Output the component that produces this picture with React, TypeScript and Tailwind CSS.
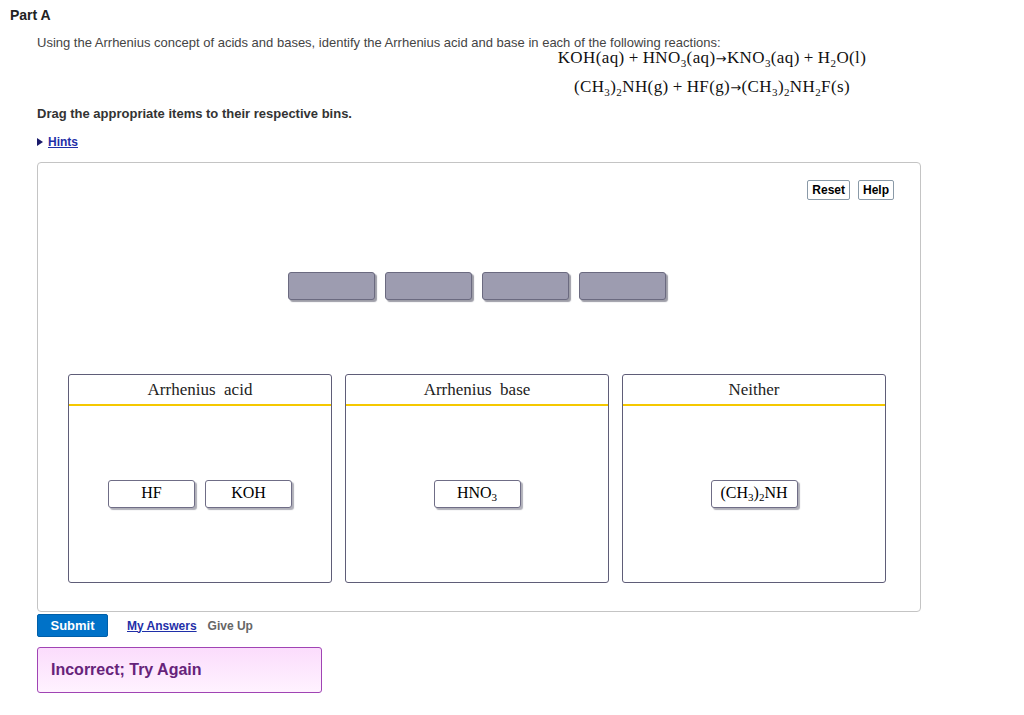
import React from 'react'

const sans = { fontFamily: 'Arial, "Liberation Sans", sans-serif' }
const serif = { fontFamily: '"Liberation Serif", "Times New Roman", serif' }
const arrowFont = { fontFamily: '"DejaVu Sans", sans-serif' }

function Sub({ children }: { children: React.ReactNode }) {
  return <span className="relative top-[4px] text-[11px]">{children}</span>
}

function Plus() {
  return <span className="mx-[4px]">+</span>
}

function Arrow() {
  return (
    <span className="text-[13px]" style={arrowFont}>
      →
    </span>
  )
}

function Item({ children }: { children: React.ReactNode }) {
  return (
    <div
      className="flex h-[28px] w-[87px] items-center justify-center rounded-[3px] border border-[#6f6d86] bg-white pb-[2px] text-[16px] leading-none text-black shadow-[2px_2px_1px_rgba(80,80,100,0.45)]"
      style={serif}
    >
      {children}
    </div>
  )
}

function Bin({ title, children }: { title: string; children?: React.ReactNode }) {
  return (
    <div className="flex h-[209px] w-[264px] flex-col rounded-[3px] border border-[#5f5d78] bg-white">
      <div
        className="flex h-[31px] items-center justify-center whitespace-pre border-b-2 border-[#f5c800] text-[17px] text-[#222]"
        style={serif}
      >
        {title}
      </div>
      <div className="flex flex-1 items-center justify-center gap-[10px]">{children}</div>
    </div>
  )
}

export default function App() {
  return (
    <div className="min-h-[715px] w-[1024px] bg-white text-[#333]" style={sans}>
      <div className="pl-[10px] pt-[6px] text-[14px] font-bold leading-[18px] text-[#222]">Part A</div>

      <div className="pl-[37px] pt-[11px]">
        <p className="text-[13px] leading-[15px] text-[#444]">
          Using the Arrhenius concept of acids and bases, identify the Arrhenius acid and base in each of the following reactions:
        </p>
        <div
          className="-mt-[2px] ml-[481px] flex w-[388px] flex-col items-center text-[17px] tracking-[0.4px] text-[#111]"
          style={serif}
        >
          <div className="h-[20px] whitespace-nowrap leading-[20px]">
            KOH(aq)<Plus />HNO<Sub>3</Sub>(aq)<Arrow />KNO<Sub>3</Sub>(aq)<Plus />H<Sub>2</Sub>O(l)
          </div>
          <div className="mt-[9px] h-[20px] whitespace-nowrap leading-[20px]">
            (CH<Sub>3</Sub>)<Sub>2</Sub>NH(g)<Plus />HF(g)<Arrow />(CH<Sub>3</Sub>)<Sub>2</Sub>NH<Sub>2</Sub>F(s)
          </div>
        </div>

        <p className="mt-[9px] text-[13px] font-bold leading-[15px] text-[#333]">
          Drag the appropriate items to their respective bins.
        </p>

        <div className="mt-[13px] flex h-[15px] items-center gap-[5px] text-[12px] font-bold">
          <svg width="6" height="8" viewBox="0 0 6 8">
            <path d="M0 0 L6 4 L0 8 Z" fill="#1a1a6a" />
          </svg>
          <a href="#" className="text-[#1f2fa8] underline">Hints</a>
        </div>

        <div className="mt-[13px] w-[884px] rounded-[4px] border border-[#c4c4c4] bg-white pb-[28px]">
          <div className="flex justify-end gap-[8px] pr-[26px] pt-[17px]">
            <button className="rounded-[2px] border border-[#8a9aa8] bg-white px-[4px] py-[2px] text-[12px] font-bold leading-[14px] text-black">
              Reset
            </button>
            <button className="rounded-[2px] border border-[#8a9aa8] bg-white px-[4px] py-[2px] text-[12px] font-bold leading-[14px] text-black">
              Help
            </button>
          </div>

          <div className="mt-[72px] flex gap-[10px] pl-[250px]">
            {[0, 1, 2, 3].map((i) => (
              <div
                key={i}
                className="h-[28px] w-[87px] rounded-[3px] border border-[#6b6a80] bg-[#9d9cb0] shadow-[2px_2px_1px_rgba(60,60,80,0.5)]"
              />
            ))}
          </div>

          <div className="mt-[74px] flex gap-[13px] pl-[30px]">
            <Bin title="Arrhenius  acid">
              <Item>HF</Item>
              <Item>KOH</Item>
            </Bin>
            <Bin title="Arrhenius  base">
              <Item>
                HNO<Sub>3</Sub>
              </Item>
            </Bin>
            <Bin title="Neither">
              <Item>
                (CH<Sub>3</Sub>)<Sub>2</Sub>NH
              </Item>
            </Bin>
          </div>
        </div>

        <div className="mt-[2px] flex items-center gap-[19px] text-[12px] font-bold">
          <button className="h-[23px] w-[71px] rounded-[2px] border border-[#005fa8] bg-[#0072c8] text-[13px] text-white">
            Submit
          </button>
          <a href="#" className="text-[#1f2fa8] underline">My Answers</a>
          <span className="-ml-[8px] text-[#666]">Give Up</span>
        </div>

        <div className="mt-[10px] flex h-[46px] w-[285px] items-center rounded-[3px] border border-[#a044b4] bg-gradient-to-b from-[#fbdcfc] to-[#fff2ff] pl-[13px] text-[16px] font-bold text-[#66237a]">
          Incorrect; Try Again
        </div>
      </div>
    </div>
  )
}
